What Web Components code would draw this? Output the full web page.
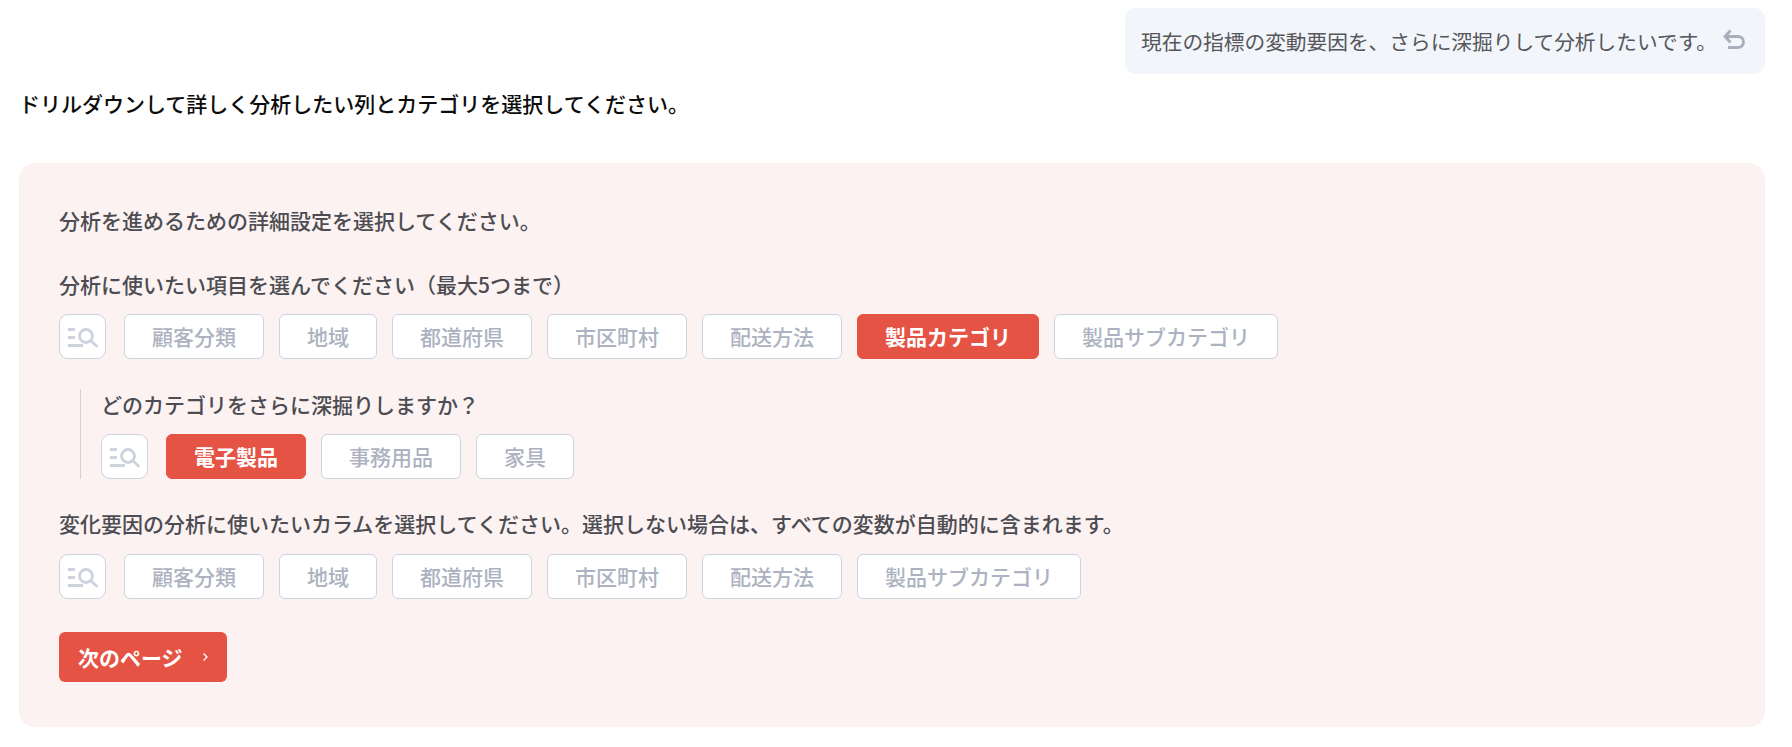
<!DOCTYPE html>
<html lang="ja"><head><meta charset="utf-8"><title>Drill down</title>
<style>
html,body{margin:0;padding:0;background:#fff}
body{font-family:"Noto Sans CJK JP","Noto Sans",sans-serif;font-size:21px}
</style></head><body>
<template id="t-chip"><style>
:host{display:inline-flex;align-items:center;justify-content:center;box-sizing:border-box;height:45px;padding:0 27px;background:#fff;border:1px solid #cdd3e0;border-radius:6px;color:#adb2c1;font-weight:500;font-size:21px;line-height:1;white-space:nowrap}
:host([selected]){background:#e55344;border-color:#e55344;color:#fff;font-weight:700}
</style><slot></slot></template>
<template id="t-search"><style>
:host{display:block;width:47px;height:45px;box-sizing:border-box;background:#fff;border:1px solid #cdd3e0;border-radius:9px}
svg{display:block;margin:-1px}
</style><svg width="47" height="45" viewBox="0 0 47 45" fill="none" stroke="#ccd2de" stroke-width="2.8"><path d="M9 15.500h7M9 23.500h7M9 31.500h15"/><circle cx="27" cy="22" r="6.500"/><path d="M31.500 26.500l6 5.500" stroke-linecap="round"/></svg></template>
<template id="t-row"><style>
:host{display:flex;gap:15px;align-items:center}
x-search{margin-right:3px}
</style><x-search></x-search><slot></slot></template>
<template id="t-bubble"><style>
:host{display:flex;align-items:center;align-self:flex-end;height:66px;box-sizing:border-box;padding:0 19px 0 16px;background:#f2f5f9;border-radius:11px;color:#56565c;gap:5px;white-space:nowrap;font-size:20.7px}
svg{display:block;flex:none;margin-top:-2px}
</style><span><slot></slot></span><svg width="24" height="24" viewBox="0 0 24 24" fill="none" stroke="#a9aebd" stroke-width="2.8"><path d="M8.500 2.500L3 8.500l5.500 6"/><path d="M3 8.500h13a5.500 5.500 0 0 1 0 11H6"/></svg></template>
<template id="t-panel"><style>
:host{display:flex;flex-direction:column;box-sizing:border-box;background:#fbf2f1;border-radius:16px;padding:42px 40px 45px}
</style><slot></slot></template>
<template id="t-label"><style>
:host{display:block;height:30px;line-height:30px;color:#4c4c52;font-weight:500;white-space:nowrap}
</style><slot></slot></template>
<template id="t-sub"><style>
:host{display:flex;flex-direction:column;gap:15px;border-left:1px solid #cdd3e0;padding-left:20px;margin-left:21px}
</style><slot></slot></template>
<template id="t-next"><style>
:host{display:inline-flex;align-self:flex-start;align-items:center;box-sizing:border-box;height:50px;width:168px;padding:0 0 0 19px;background:#e55344;border-radius:6px;color:#fff;font-weight:700;white-space:nowrap}
svg{display:block;margin-left:19px}
</style><slot></slot><svg width="6" height="10" viewBox="0 0 6 10" fill="none" stroke="#fff" stroke-width="1.300"><path d="M1.500 1.500L5 5 1.500 8.500"/></svg></template>

<x-page>
<x-bubble>現在の指標の変動要因を、さらに深掘りして分析したいです。</x-bubble>
<x-heading>ドリルダウンして詳しく分析したい列とカテゴリを選択してください。</x-heading>
<x-panel>
<x-label>分析を進めるための詳細設定を選択してください。</x-label>
<x-label style="margin-top:34px">分析に使いたい項目を選んでください（最大5つまで）</x-label>
<x-row style="margin-top:15px"><x-chip>顧客分類</x-chip><x-chip>地域</x-chip><x-chip>都道府県</x-chip><x-chip>市区町村</x-chip><x-chip>配送方法</x-chip><x-chip selected>製品カテゴリ</x-chip><x-chip>製品サブカテゴリ</x-chip></x-row>
<x-sub style="margin-top:30px"><x-label>どのカテゴリをさらに深掘りしますか？</x-label><x-row><x-chip selected>電子製品</x-chip><x-chip>事務用品</x-chip><x-chip>家具</x-chip></x-row></x-sub>
<x-label style="margin-top:29px">変化要因の分析に使いたいカラムを選択してください。選択しない場合は、すべての変数が自動的に含まれます。</x-label>
<x-row style="margin-top:16px"><x-chip>顧客分類</x-chip><x-chip>地域</x-chip><x-chip>都道府県</x-chip><x-chip>市区町村</x-chip><x-chip>配送方法</x-chip><x-chip>製品サブカテゴリ</x-chip></x-row>
<x-next style="margin-top:33px">次のページ</x-next>
</x-panel>
</x-page>
<script>
function def(name,tid,extra){
  customElements.define(name,class extends HTMLElement{
    constructor(){super();const s=this.attachShadow({mode:'open'});
      if(tid)s.appendChild(document.getElementById(tid).content.cloneNode(true));
      else{s.innerHTML=extra}}
  });
}
def('x-chip','t-chip');def('x-search','t-search');def('x-row','t-row');def('x-bubble','t-bubble');
def('x-panel','t-panel');def('x-label','t-label');def('x-sub','t-sub');def('x-next','t-next');
def('x-page',null,'<style>:host{display:flex;flex-direction:column;padding:8px 27px 20px 19px;box-sizing:border-box;width:1792px;height:747px;overflow:hidden}</style><slot></slot>');
def('x-heading',null,'<style>:host{display:block;height:30px;line-height:30px;margin-top:14px;margin-bottom:45px;color:#0c0c0c;font-weight:500;white-space:nowrap}</style><slot></slot>');
</script>
</body></html>
